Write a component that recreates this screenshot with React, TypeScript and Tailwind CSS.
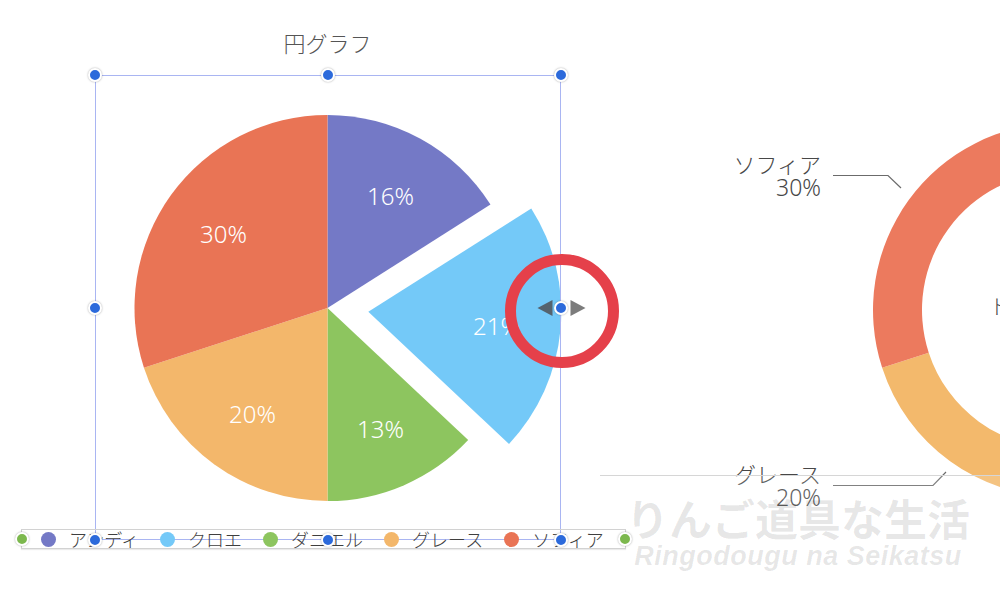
import React from 'react';

type Slice = { name: string; value: number; pie: string; ring: string };

const slices: Slice[] = [
  { name: 'アンディ', value: 16, pie: '#7479c6', ring: '#7479c6' },
  { name: 'クロエ', value: 21, pie: '#74c9f8', ring: '#74c9f8' },
  { name: 'ダニエル', value: 13, pie: '#8dc55f', ring: '#8dc55f' },
  { name: 'グレース', value: 20, pie: '#f3b76b', ring: '#f3b96c' },
  { name: 'ソフィア', value: 30, pie: '#e97455', ring: '#ec7a5e' },
];

// angles are degrees, clockwise from 12 o'clock
const pt = (cx: number, cy: number, r: number, a: number) => {
  const rad = (a * Math.PI) / 180;
  return [cx + r * Math.sin(rad), cy - r * Math.cos(rad)];
};

function wedge(cx: number, cy: number, r: number, a0: number, a1: number) {
  const [x0, y0] = pt(cx, cy, r, a0);
  const [x1, y1] = pt(cx, cy, r, a1);
  const large = a1 - a0 > 180 ? 1 : 0;
  return `M${cx},${cy} L${x0},${y0} A${r},${r} 0 ${large} 1 ${x1},${y1} Z`;
}

function band(cx: number, cy: number, r: number, ri: number, a0: number, a1: number) {
  const [x0, y0] = pt(cx, cy, r, a0);
  const [x1, y1] = pt(cx, cy, r, a1);
  const [x2, y2] = pt(cx, cy, ri, a1);
  const [x3, y3] = pt(cx, cy, ri, a0);
  const large = a1 - a0 > 180 ? 1 : 0;
  return `M${x0},${y0} A${r},${r} 0 ${large} 1 ${x1},${y1} L${x2},${y2} A${ri},${ri} 0 ${large} 0 ${x3},${y3} Z`;
}

const withAngles = (() => {
  let acc = 0;
  return slices.map(s => {
    const a0 = acc * 3.6;
    acc += s.value;
    return { ...s, a0, a1: acc * 3.6 };
  });
})();

const pieLabels = [
  { text: '16%', x: 390, y: 195 },
  { text: '21%', x: 496, y: 325 },
  { text: '13%', x: 380, y: 428 },
  { text: '20%', x: 252, y: 413 },
  { text: '30%', x: 223, y: 233 },
];

const handlePos = [
  'left-0 top-0',
  'left-1/2 top-0',
  'left-full top-0',
  'left-0 top-1/2',
  'left-full top-1/2',
  'left-0 top-full',
  'left-1/2 top-full',
  'left-full top-full',
];

function PieChart() {
  const cx = 327;
  const cy = 308;
  const r = 193;
  return (
    <svg className="absolute inset-0 overflow-visible" width={466} height={465} viewBox="94.5 75 466 465">
      {withAngles.map((s, i) => {
        // Chloe's slice is pulled out along its bisector
        const off = i === 1 ? 41 : 0;
        const mid = ((s.a0 + s.a1) / 2) * (Math.PI / 180);
        const dx = off * Math.sin(mid);
        const dy = -off * Math.cos(mid);
        return <path key={s.name} d={wedge(cx + dx, cy + dy, r, s.a0, s.a1)} fill={s.pie} />;
      })}
      {pieLabels.map(l => (
        <text
          key={l.text}
          x={l.x}
          y={l.y}
          fill="#ffffff"
          fontSize={24}
          fontWeight={300}
          fontFamily="'Noto Sans', sans-serif"
          textAnchor="middle"
          dominantBaseline="central"
        >
          {l.text}
        </text>
      ))}
    </svg>
  );
}

function DonutChart() {
  const cx = 1060;
  const cy = 310;
  return (
    <svg className="absolute inset-0" width={345} height={590} viewBox="655 0 345 590">
      {withAngles.map(s => (
        <path key={s.name} d={band(cx, cy, 187, 138, s.a0, s.a1)} fill={s.ring} />
      ))}
      <g fontFamily="'Noto Sans', 'Noto Sans CJK JP', sans-serif" fontWeight={300} fill="#474747" fontSize={22} textAnchor="end" dominantBaseline="central">
        <text x={821} y={164}>ソフィア</text>
        <text x={821} y={187} fontSize={23}>30%</text>
        <text x={821} y={474}>グレース</text>
        <text x={821} y={497} fontSize={23}>20%</text>
      </g>
      <text x={989} y={305} fontSize={21} fontWeight={300} fill="#474747" dominantBaseline="central" fontFamily="'Noto Sans CJK JP', sans-serif">
        トータル
      </text>
      <path d="M833,175.5 H888 L901,188" fill="none" stroke="#6b6b6b" strokeWidth={1.2} />
      <path d="M833,485.5 H933 L946,472" fill="none" stroke="#6b6b6b" strokeWidth={1.2} />
    </svg>
  );
}

function Handle({ pos, color }: { pos: string; color: string }) {
  return (
    <span
      className={`absolute z-20 ${pos} -translate-x-1/2 -translate-y-1/2 w-[14px] h-[14px] rounded-full border-2 border-white shadow-[0_0_2px_rgba(0,0,0,0.35)] ${color}`}
    />
  );
}

export default function App() {
  return (
    <div className="relative flex w-[1000px] h-[590px] overflow-hidden bg-white font-['Noto_Sans','Noto_Sans_CJK_JP',sans-serif]">
      {/* Left: selected pie chart */}
      <section className="w-[655px] shrink-0 flex flex-col items-center pt-[29px]">
        <h2 className="text-[22px] leading-[28px] font-light text-[#555]">円グラフ</h2>

        <div className="relative mt-[18px] w-[466px] h-[465px]">
          <PieChart />
          <div className="absolute inset-0 border border-[#a9b5f2]" />

          {/* highlight ring around the drag handle */}
          <div className="absolute left-[410px] top-[179px] w-[114px] h-[114px] rounded-full border-[11px] border-[#e5404a]" />
          <svg className="absolute inset-0 overflow-visible" width={466} height={465} viewBox="94.5 75 466 465">
            <polygon points="537,308 552,300 552,316" fill="#55636e" />
            <polygon points="570,300 585,308 570,316" fill="#7c7c7c" />
          </svg>

          {handlePos.map(p => (
            <Handle key={p} pos={p} color="bg-[#2c6adb]" />
          ))}
        </div>

        {/* Legend */}
        <div className="relative z-10 -mt-[11px] self-start ml-[21px] w-[605px] h-[20px] flex items-center gap-[21px] px-[19px] border border-[#d2d2d2] shadow-[0_1px_1px_rgba(0,0,0,0.08)]">
          {slices.map(s => (
            <div key={s.name} className="flex items-center gap-[13px]">
              <span className="w-[15px] h-[15px] rounded-full" style={{ backgroundColor: s.pie }} />
              <span className="text-[18px] leading-none font-light text-[#3f3f3f] font-['Noto_Sans_CJK_JP',sans-serif]">
                {s.name}
              </span>
            </div>
          ))}
          <Handle pos="left-0 top-1/2" color="bg-[#7cb84e]" />
          <Handle pos="left-full top-1/2" color="bg-[#7cb84e]" />
        </div>
      </section>

      {/* Right: donut chart, cut off at the window edge */}
      <section className="relative flex-1">
        <DonutChart />
      </section>

      {/* lower canvas edge */}
      <div className="pointer-events-none absolute left-[600px] top-[475px] right-0 bottom-0 border-t border-[#d6d6d6] bg-white/15" />

      {/* watermark */}
      <div className="pointer-events-none absolute left-[626px] top-[493px] flex flex-col items-center text-black/[0.1]">
        <span className="text-[43px] leading-[48px] font-bold font-['Noto_Sans_CJK_JP',sans-serif]">りんご道具な生活</span>
        <span className="text-[27px] leading-[30px] font-bold italic tracking-[0.5px] font-['Liberation_Sans',sans-serif]">
          Ringodougu na Seikatsu
        </span>
      </div>
    </div>
  );
}
